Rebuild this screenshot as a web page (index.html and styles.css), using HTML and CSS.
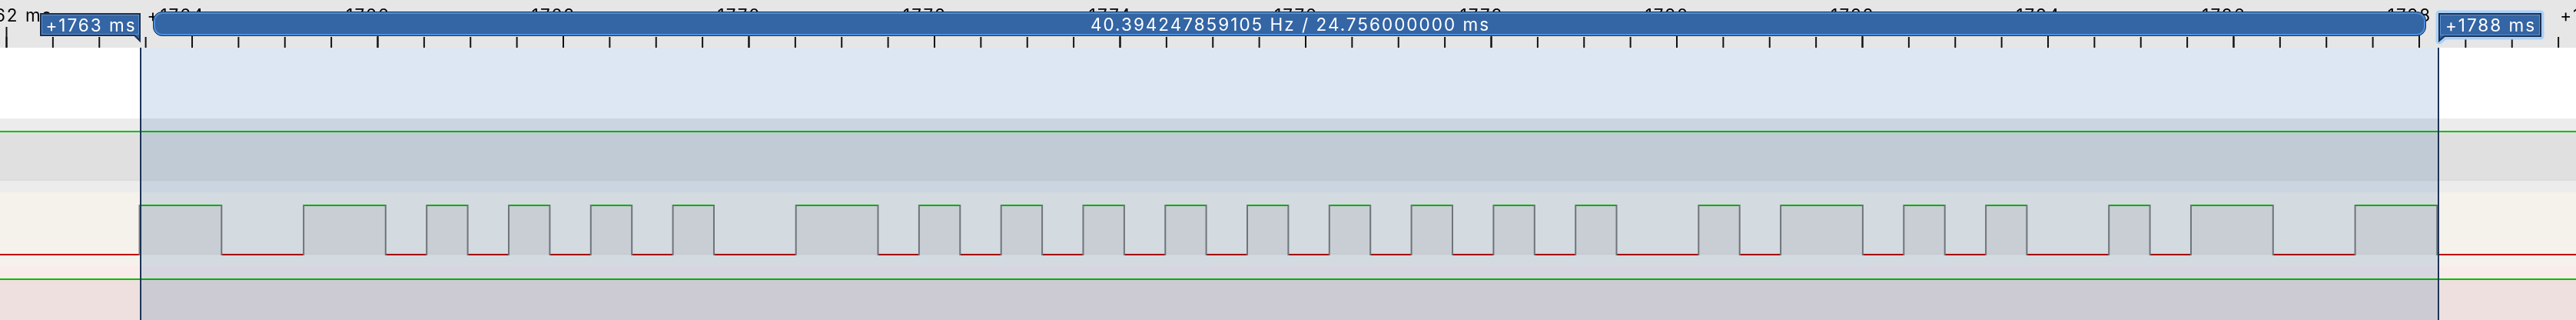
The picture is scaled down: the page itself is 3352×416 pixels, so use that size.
FILE: index.html
```html
<!DOCTYPE html>
<html lang="en">

<head>
    <meta charset="UTF-8" />
    <title>Logic view</title>
    <link rel="stylesheet" href="styles.css">
</head>

<body>
    <div class="ruler">
        <svg class="ticks" width="3352" height="62">
            <defs>
                <pattern id="minor" patternUnits="userSpaceOnUse" x="7.5" width="60.375" height="62">
                    <rect x="0" y="48" width="2" height="14" />
                </pattern>
                <pattern id="major" patternUnits="userSpaceOnUse" x="7.5" width="241.5" height="62">
                    <rect x="0" y="35" width="2" height="27" />
                </pattern>
            </defs>
            <rect width="3352" height="62" fill="url(#minor)" />
            <rect width="3352" height="62" fill="url(#major)" />
        </svg>

        <div class="labels">
            <span>+1762 ms</span>
            <span>+1764 ms</span>
            <span>+1766 ms</span>
            <span>+1768 ms</span>
            <span>+1770 ms</span>
            <span>+1772 ms</span>
            <span>+1774 ms</span>
            <span>+1776 ms</span>
            <span>+1778 ms</span>
            <span>+1780 ms</span>
            <span>+1782 ms</span>
            <span>+1784 ms</span>
            <span>+1786 ms</span>
            <span>+1788 ms</span>
            <span>+1790 ms</span>
        </div>

        <div class="flags">
            <div class="flag flag-left">
                <svg width="131" height="37">
                    <polygon class="flag-body" points="1,1 130,1 130,36 123,29 1,29" />
                    <rect class="flag-shine" x="2.5" y="2.5" width="126" height="25" />
                </svg>
                <div class="flag-text">+1763 ms</div>
            </div>
            <div class="span">40.394247859105 Hz / 24.756000000 ms</div>
            <div class="flag flag-right">
                <svg width="134" height="37">
                    <polygon class="flag-halo" points="1,1 133,1 133,30 8,30 1,36" />
                    <polygon class="flag-body" points="1,1 133,1 133,30 8,30 1,36" />
                    <rect class="flag-shine" x="2.5" y="2.5" width="129" height="26" />
                </svg>
                <div class="flag-text">+1788 ms</div>
            </div>
        </div>
    </div>

    <div class="traces">
        <div class="rows">
            <div class="row row0"></div>
            <div class="row row1"></div>
            <div class="row row2"></div>
            <div class="row row3"></div>
        </div>

        <div class="selection"></div>

        <svg class="wave" width="3352" height="354" viewBox="0 0 3352 354">
            <path class="fill" d="M0 110H3352V172H0Z M0 302H3352V354H0Z
                M181.5 206H288.3V268H181.5Z M395.1 206H501.8V268H395.1Z M555.2 206H608.6V268H555.2Z
                M662 206H715.4V268H662Z M768.8 206H822.2V268H768.8Z M875.6 206H929V268H875.6Z
                M1035.7 206H1142.5V268H1035.7Z M1195.9 206H1249.3V268H1195.9Z M1302.7 206H1356.1V268H1302.7Z
                M1409.5 206H1462.9V268H1409.5Z M1516.3 206H1569.6V268H1516.3Z M1623 206H1676.4V268H1623Z
                M1729.8 206H1783.2V268H1729.8Z M1836.6 206H1890V268H1836.6Z M1943.4 206H1996.8V268H1943.4Z
                M2050.2 206H2103.5V268H2050.2Z M2210.3 206H2263.7V268H2210.3Z M2317.1 206H2423.9V268H2317.1Z
                M2477.3 206H2530.7V268H2477.3Z M2584.1 206H2637.4V268H2584.1Z M2744.2 206H2797.6V268H2744.2Z
                M2851 206H2957.8V268H2851Z M3064.6 206H3171.3V268H3064.6Z" />
            <path class="faint" d="M0 172.5H3352M0 268.5H3352" />
            <path class="hi" d="M0 109H3352M0 301H3352
                M181.5 205H288.3M395.1 205H501.8M555.2 205H608.6M662 205H715.4M768.8 205H822.2
                M875.6 205H929M1035.7 205H1142.5M1195.9 205H1249.3M1302.7 205H1356.1M1409.5 205H1462.9
                M1516.3 205H1569.6M1623 205H1676.4M1729.8 205H1783.2M1836.6 205H1890M1943.4 205H1996.8
                M2050.2 205H2103.5M2210.3 205H2263.7M2317.1 205H2423.9M2477.3 205H2530.7M2584.1 205H2637.4
                M2744.2 205H2797.6M2851 205H2957.8M3064.6 205H3171.3" />
            <path class="lo" d="M0 269H181.5M288.3 269H395.1M501.8 269H555.2M608.6 269H662M715.4 269H768.8
                M822.2 269H875.6M929 269H1035.7M1142.5 269H1195.9M1249.3 269H1302.7M1356.1 269H1409.5
                M1462.9 269H1516.3M1569.6 269H1623M1676.4 269H1729.8M1783.2 269H1836.6M1890 269H1943.4
                M1996.8 269H2050.2M2103.5 269H2210.3M2263.7 269H2317.1M2423.9 269H2477.3M2530.7 269H2584.1
                M2637.4 269H2744.2M2797.6 269H2851M2957.8 269H3064.6M3171.3 269H3352" />
            <path class="edge" d="M181.5 204V270M288.3 204V270M395.1 204V270M501.8 204V270M555.2 204V270
                M608.6 204V270M662 204V270M715.4 204V270M768.8 204V270M822.2 204V270M875.6 204V270
                M929 204V270M1035.7 204V270M1142.5 204V270M1195.9 204V270M1249.3 204V270M1302.7 204V270
                M1356.1 204V270M1409.5 204V270M1462.9 204V270M1516.3 204V270M1569.6 204V270M1623 204V270
                M1676.4 204V270M1729.8 204V270M1783.2 204V270M1836.6 204V270M1890 204V270M1943.4 204V270
                M1996.8 204V270M2050.2 204V270M2103.5 204V270M2210.3 204V270M2263.7 204V270M2317.1 204V270
                M2423.9 204V270M2477.3 204V270M2530.7 204V270M2584.1 204V270M2637.4 204V270M2744.2 204V270
                M2797.6 204V270M2851 204V270M2957.8 204V270M3064.6 204V270M3171.3 204V270" />
        </svg>

        <div class="cursors">
            <div class="cursor cursor-a"></div>
            <div class="cursor cursor-b"></div>
        </div>
    </div>
</body>

</html>
```

FILE: styles.css
```css
* {
    box-sizing: border-box;
}

body {
    margin: 0;
    width: 3352px;
    height: 416px;
    overflow: hidden;
    background: #fff;
    font-family: Inter, 'Liberation Sans', sans-serif;
}

/* ruler */

.ruler {
    display: grid;
    height: 62px;
    background: #e6e6e6;
    overflow: hidden;
}

.ruler > * {
    grid-area: 1 / 1;
}

.ticks {
    display: block;
    fill: #111;
}

.labels {
    display: flex;
    margin-left: -112.25px;
    padding-top: 9px;
}

.labels span {
    flex: 0 0 241.5px;
    padding-left: 2px;
    text-align: center;
    font-size: 22.5px;
    letter-spacing: 2px;
    line-height: 22px;
    color: #000;
    white-space: nowrap;
}

.flags {
    display: flex;
    align-items: flex-start;
    padding-top: 15px;
}

.flag {
    display: grid;
    flex: none;
    margin-top: 2px;
}

.flag > * {
    grid-area: 1 / 1;
}

.flag svg {
    display: block;
    overflow: visible;
}

.flag-left {
    margin-left: 52px;
    width: 131px;
}

.flag-right {
    margin-left: 16px;
    width: 134px;
}

.flag-body {
    fill: #3465a4;
    stroke: #1c2f4d;
    stroke-width: 2;
    stroke-linejoin: miter;
}

.flag-shine {
    fill: none;
    stroke: #5f93d6;
    stroke-width: 1;
}

.flag-halo {
    fill: #a9d0f8;
    stroke: #a9d0f8;
    stroke-width: 9;
    stroke-linejoin: round;
}

.flag-text {
    align-self: start;
    padding-top: 2px;
    padding-left: 2px;
    height: 30px;
    color: #fff;
    font-size: 22.5px;
    letter-spacing: 2px;
    line-height: 28px;
    text-align: center;
    white-space: nowrap;
}

.span {
    flex: none;
    margin-left: 16px;
    width: 2958px;
    height: 32px;
    padding-top: 1px;
    padding-left: 2px;
    border: 1px solid #1c2e4a;
    border-radius: 12px;
    background: #3465a4;
    box-shadow: inset 0 0 0 2px #4a8fe0;
    color: #fff;
    font-size: 22.5px;
    letter-spacing: 2px;
    line-height: 29px;
    text-align: center;
    white-space: nowrap;
}

/* traces */

.traces {
    display: grid;
    height: 354px;
    overflow: hidden;
}

.traces > * {
    grid-area: 1 / 1;
}

.rows {
    display: flex;
    flex-direction: column;
}

.row {
    flex: none;
    height: 96px;
}

.row0 {
    height: 92px;
    background: #fff;
}

.row1 {
    background: #ececec;
}

.row2 {
    background: #f5f1eb;
}

.row3 {
    background: #faeceb;
}

.selection {
    margin-left: 183px;
    width: 2990px;
    background: rgb(220, 231, 243);
    mix-blend-mode: multiply;
}

.wave {
    display: block;
}

.wave .fill {
    fill: rgba(0, 0, 0, 0.05);
}

.wave .faint {
    fill: none;
    stroke: rgba(0, 0, 0, 0.06);
    stroke-width: 1.5;
}

.wave .hi {
    fill: none;
    stroke: #00c000;
    stroke-width: 2;
}

.wave .lo {
    fill: none;
    stroke: #c00000;
    stroke-width: 2;
}

.wave .edge {
    fill: none;
    stroke: #808080;
    stroke-width: 2;
}

.cursors {
    display: flex;
}

.cursor {
    flex: none;
    width: 2px;
    background: #1f3558;
}

.cursor-a {
    margin-left: 182px;
}

.cursor-b {
    margin-left: 2988px;
}
```
